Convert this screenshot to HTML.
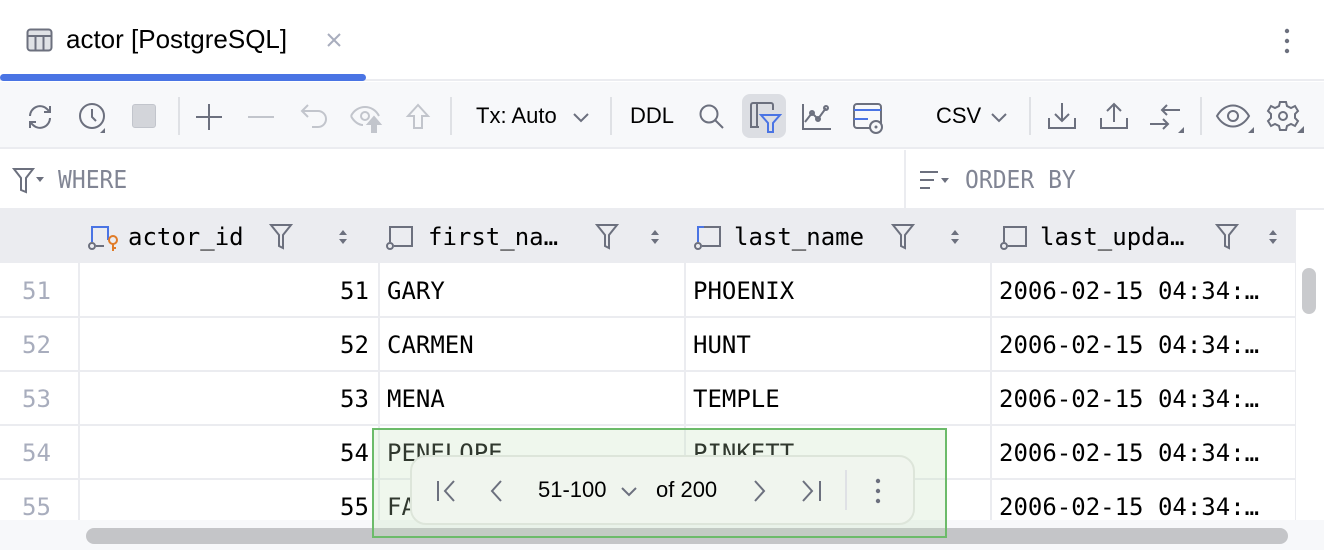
<!DOCTYPE html>
<html><head><style>
*{margin:0;padding:0;box-sizing:border-box}
body{width:1324px;height:550px;overflow:hidden;background:#fff;font-family:"Liberation Sans",sans-serif;position:relative;color:#000}
.abs{position:absolute}
.mono{font-family:"DejaVu Sans Mono","Liberation Mono",monospace}
svg{position:absolute;overflow:visible}
.cell{position:absolute;font-family:"DejaVu Sans Mono","Liberation Mono",monospace;font-size:24px;line-height:54px;white-space:nowrap}
</style></head><body>
<div class="abs" style="left:0;top:0;width:1324px;height:81px;background:#fff;border-bottom:2px solid #ebecf0"></div>
<svg style="left:26px;top:28px" width="28" height="26" viewBox="0 0 28 26"><rect x="1.5" y="1.5" width="24" height="21" rx="3" fill="#dfe1e5" stroke="#6c707e" stroke-width="2"/><path d="M1.5 8H25.5M9.5 8V22.5M17.5 8V22.5" stroke="#6c707e" stroke-width="2"/></svg>
<div class="abs" style="left:66px;top:24px;font-size:26px;color:#000">actor [PostgreSQL]</div>
<svg style="left:326px;top:32px" width="16" height="16"><path d="M2 2L14 14M14 2L2 14" stroke="#a8adbd" stroke-width="2"/></svg>
<div class="abs" style="left:0;top:74px;width:366px;height:7px;background:#4a74e4;border-radius:4px"></div>
<svg style="left:1284px;top:28px" width="6" height="26"><circle cx="3" cy="3" r="2.2" fill="#6c707e"/><circle cx="3" cy="13" r="2.2" fill="#6c707e"/><circle cx="3" cy="23" r="2.2" fill="#6c707e"/></svg>
<div class="abs" style="left:0;top:82px;width:1324px;height:67px;background:#f7f8fa;border-bottom:2px solid #ebecf0"></div>
<svg style="left:24px;top:102px" width="32" height="30" fill="none" stroke="#6c707e" stroke-width="2"><path d="M6 14a10 10 0 0 1 17-7l3 3M26 16a10 10 0 0 1-17 7l-3-3M26 4v6h-6M6 26v-6h6"/></svg>
<svg style="left:78px;top:100px" width="32" height="34" fill="none" stroke="#6c707e" stroke-width="2"><circle cx="14" cy="16" r="12"/><path d="M14 9v8l4 4"/><path d="M27 28l0 5-5 0z" fill="#6c707e" stroke="none"/></svg>
<div class="abs" style="left:132px;top:104px;width:24px;height:24px;background:#d3d5da;border:1.5px solid #c2c5cc;border-radius:3px"></div>
<div class="abs" style="left:178px;top:97px;width:2px;height:38px;background:#dfe1e5"></div>
<svg style="left:196px;top:104px" width="26" height="26" stroke="#6c707e" stroke-width="2"><path d="M13 0v26M0 13h26"/></svg>
<svg style="left:248px;top:104px" width="26" height="26" stroke="#c2c5cc" stroke-width="2"><path d="M0 13h26"/></svg>
<svg style="left:300px;top:103px" width="30" height="28" fill="none" stroke="#c2c5cc" stroke-width="2"><path d="M8 2L2 8l6 6M2 8h16a8 8 0 0 1 0 16h-6"/></svg>
<svg style="left:350px;top:104px" width="34" height="30" fill="none" stroke="#c2c5cc" stroke-width="2"><path d="M1 12c6-12 22-12 28 0M1 12c3 6 8 9 12 9"/><circle cx="15" cy="12" r="4"/><path d="M24 13l-6 7h4v8h4v-8h4z" fill="#c2c5cc"/></svg>
<svg style="left:406px;top:104px" width="24" height="26" fill="none" stroke="#c2c5cc" stroke-width="2"><path d="M12 1L2 12h6v12h8V12h6z"/></svg>
<div class="abs" style="left:450px;top:97px;width:2px;height:38px;background:#dfe1e5"></div>
<div class="abs" style="left:476px;top:103px;font-size:22px;color:#000">Tx: Auto</div>
<svg style="left:572px;top:112px" width="18" height="12" fill="none" stroke="#6c707e" stroke-width="2"><path d="M2 2l7 7 7-7"/></svg>
<div class="abs" style="left:610px;top:97px;width:2px;height:38px;background:#dfe1e5"></div>
<div class="abs" style="left:630px;top:103px;font-size:22px;color:#000">DDL</div>
<svg style="left:699px;top:104px" width="26" height="26" fill="none" stroke="#6c707e" stroke-width="2"><circle cx="10" cy="10" r="8.5"/><path d="M16 16l8 8"/></svg>
<div class="abs" style="left:742px;top:94px;width:44px;height:44px;background:#dcdee3;border-radius:8px"></div>
<svg style="left:750px;top:102px" width="32" height="32" fill="none" stroke-width="2"><path d="M12 1H3a2 2 0 0 0-2 2v22h8M7 1v24M7 1h14a2 2 0 0 1 2 2v5" stroke="#6c707e"/><path d="M11 13h19l-7 8v9h-5v-9z" stroke="#4a74e4"/></svg>
<svg style="left:802px;top:104px" width="30" height="26" fill="none" stroke="#6c707e" stroke-width="2"><path d="M1 0v25h28M3 18l7-9 6 6 8-11"/><circle cx="10" cy="9" r="2"/><circle cx="16" cy="15" r="2"/><circle cx="24" cy="4" r="2"/></svg>
<svg style="left:853px;top:103px" width="32" height="30" fill="none" stroke-width="2"><rect x="1" y="1" width="27" height="24" rx="3" stroke="#6c707e"/><path d="M1 7h27M1 16h14" stroke="#4a74e4"/><circle cx="23" cy="24" r="6" fill="#f7f8fa" stroke="#6c707e"/><circle cx="23" cy="24" r="1.5" fill="#6c707e"/></svg>
<div class="abs" style="left:936px;top:103px;font-size:22px;color:#000">CSV</div>
<svg style="left:990px;top:112px" width="18" height="12" fill="none" stroke="#6c707e" stroke-width="2"><path d="M2 2l7 7 7-7"/></svg>
<div class="abs" style="left:1029px;top:97px;width:2px;height:38px;background:#dfe1e5"></div>
<svg style="left:1048px;top:102px" width="28" height="28" fill="none" stroke="#6c707e" stroke-width="2"><path d="M14 1v18M7 12l7 7 7-7M1 16v10h26V16"/></svg>
<svg style="left:1100px;top:102px" width="28" height="28" fill="none" stroke="#6c707e" stroke-width="2"><path d="M14 20V2M7 9l7-7 7 7M1 16v10h26V16"/></svg>
<svg style="left:1150px;top:102px" width="36" height="32" fill="none" stroke="#6c707e" stroke-width="2"><path d="M12 8h18M17 3l-5 5 5 5M0 22h18M13 17l5 5-5 5"/><path d="M34 25v6h-6z" fill="#6c707e" stroke="none"/></svg>
<div class="abs" style="left:1200px;top:97px;width:2px;height:38px;background:#dfe1e5"></div>
<svg style="left:1216px;top:104px" width="38" height="30" fill="none" stroke="#6c707e" stroke-width="2"><path d="M1 12c8-14 24-14 32 0c-8 14-24 14-32 0z"/><circle cx="17" cy="12" r="5"/><path d="M38 23v6h-6z" fill="#6c707e" stroke="none"/></svg>
<svg style="left:1268px;top:100px" width="38" height="34" fill="none" stroke="#6c707e" stroke-width="2"><path d="M12 2h6l1 4 4 2 4-2 3 5-3 3v4l3 3-3 5-4-2-4 2-1 4h-6l-1-4-4-2-4 2-3-5 3-3v-4l-3-3 3-5 4 2 4-2z"/><circle cx="15" cy="16" r="4"/><path d="M36 26v7h-7z" fill="#6c707e" stroke="none"/></svg>
<svg style="left:13px;top:168px" width="34" height="28" fill="none" stroke="#6c707e" stroke-width="2"><path d="M1 1h19l-7 9v14l-5-2V10z"/><path d="M23 9h8l-4 5z" fill="#6c707e" stroke="none"/></svg>
<div class="abs mono" style="left:58px;top:165px;font-size:25px;color:#818594;transform:scaleX(.92);transform-origin:left">WHERE</div>
<div class="abs" style="left:904px;top:150px;width:2px;height:58px;background:#ebecf0"></div>
<svg style="left:920px;top:170px" width="32" height="22" fill="none" stroke="#6c707e" stroke-width="2"><path d="M0 2h18M0 10h14M0 18h10"/><path d="M21 8h8l-4 5z" fill="#6c707e" stroke="none"/></svg>
<div class="abs mono" style="left:965px;top:165px;font-size:25px;color:#818594;transform:scaleX(.92);transform-origin:left">ORDER BY</div>
<div class="abs" style="left:0;top:208px;width:1324px;height:2px;background:#ebecf0"></div>
<div class="abs" style="left:0;top:210px;width:1296px;height:53px;background:#ebecf0"></div>
<div class="abs" style="left:78px;top:210px;width:2px;height:312px;background:#ebecf0"></div>
<div class="abs" style="left:378px;top:210px;width:2px;height:312px;background:#ebecf0"></div>
<div class="abs" style="left:684px;top:210px;width:2px;height:312px;background:#ebecf0"></div>
<div class="abs" style="left:990px;top:210px;width:2px;height:312px;background:#ebecf0"></div>
<div class="abs" style="left:1295px;top:210px;width:1px;height:312px;background:#ebecf0"></div>
<div class="abs" style="left:0;top:316px;width:1296px;height:2px;background:#ebecf0"></div>
<div class="abs" style="left:0;top:370px;width:1296px;height:2px;background:#ebecf0"></div>
<div class="abs" style="left:0;top:424px;width:1296px;height:2px;background:#ebecf0"></div>
<div class="abs" style="left:0;top:478px;width:1296px;height:2px;background:#ebecf0"></div>
<svg style="left:88px;top:224px" width="36" height="28" fill="none" stroke-width="2"><path d="M4 18V3h16v13" stroke="#4a74e4"/><circle cx="4" cy="22" r="3" stroke="#6c707e"/><path d="M8 22h8" stroke="#6c707e"/><circle cx="25" cy="16" r="4" stroke="#e07b27"/><path d="M25 20v7M25 24h3" stroke="#e07b27"/></svg>
<div class="cell" style="left:128px;top:210px">actor_id</div>
<svg style="left:386px;top:224px" width="32" height="28" fill="none" stroke="#6c707e" stroke-width="2"><path d="M4 18V3h22v19H8"/><circle cx="4" cy="22" r="3"/></svg>
<div class="cell" style="left:428px;top:210px">first_na…</div>
<svg style="left:694px;top:224px" width="32" height="28" fill="none" stroke-width="2"><path d="M4 18V3h6" stroke="#4a74e4"/><path d="M10 3h16v19H8" stroke="#6c707e"/><circle cx="4" cy="22" r="3" stroke="#6c707e"/></svg>
<div class="cell" style="left:734px;top:210px">last_name</div>
<svg style="left:1000px;top:224px" width="32" height="28" fill="none" stroke="#6c707e" stroke-width="2"><path d="M4 18V3h22v19H8"/><circle cx="4" cy="22" r="3"/></svg>
<div class="cell" style="left:1040px;top:210px">last_upda…</div>
<svg style="left:270px;top:224px" width="24" height="26" fill="none" stroke="#6c707e" stroke-width="2"><path d="M1 1h20l-8 10v13l-4-2V11z"/></svg>
<svg style="left:338px;top:229px" width="10" height="16" fill="#6c707e"><path d="M5 1l4 5H1zM5 15l4-5H1z"/></svg>
<svg style="left:596px;top:224px" width="24" height="26" fill="none" stroke="#6c707e" stroke-width="2"><path d="M1 1h20l-8 10v13l-4-2V11z"/></svg>
<svg style="left:650px;top:229px" width="10" height="16" fill="#6c707e"><path d="M5 1l4 5H1zM5 15l4-5H1z"/></svg>
<svg style="left:892px;top:224px" width="24" height="26" fill="none" stroke="#6c707e" stroke-width="2"><path d="M1 1h20l-8 10v13l-4-2V11z"/></svg>
<svg style="left:950px;top:229px" width="10" height="16" fill="#6c707e"><path d="M5 1l4 5H1zM5 15l4-5H1z"/></svg>
<svg style="left:1216px;top:224px" width="24" height="26" fill="none" stroke="#6c707e" stroke-width="2"><path d="M1 1h20l-8 10v13l-4-2V11z"/></svg>
<svg style="left:1268px;top:229px" width="10" height="16" fill="#6c707e"><path d="M5 1l4 5H1zM5 15l4-5H1z"/></svg>
<div class="cell" style="left:22px;top:264px;color:#a8adbd">51</div>
<div class="cell" style="left:22px;top:318px;color:#a8adbd">52</div>
<div class="cell" style="left:22px;top:372px;color:#a8adbd">53</div>
<div class="cell" style="left:22px;top:426px;color:#a8adbd">54</div>
<div class="cell" style="left:22px;top:480px;color:#a8adbd">55</div>
<div class="cell" style="left:340px;top:264px">51</div>
<div class="cell" style="left:340px;top:318px">52</div>
<div class="cell" style="left:340px;top:372px">53</div>
<div class="cell" style="left:340px;top:426px">54</div>
<div class="cell" style="left:340px;top:480px">55</div>
<div class="cell" style="left:387px;top:264px">GARY</div>
<div class="cell" style="left:387px;top:318px">CARMEN</div>
<div class="cell" style="left:387px;top:372px">MENA</div>
<div class="cell" style="left:387px;top:426px">PENELOPE</div>
<div class="cell" style="left:387px;top:480px">FAY</div>
<div class="cell" style="left:693px;top:264px">PHOENIX</div>
<div class="cell" style="left:693px;top:318px">HUNT</div>
<div class="cell" style="left:693px;top:372px">TEMPLE</div>
<div class="cell" style="left:693px;top:426px">PINKETT</div>
<div class="cell" style="left:999px;top:264px">2006-02-15 04:34:…</div>
<div class="cell" style="left:999px;top:318px">2006-02-15 04:34:…</div>
<div class="cell" style="left:999px;top:372px">2006-02-15 04:34:…</div>
<div class="cell" style="left:999px;top:426px">2006-02-15 04:34:…</div>
<div class="cell" style="left:999px;top:480px">2006-02-15 04:34:…</div>
<div class="abs" style="left:1296px;top:210px;width:28px;height:312px;background:#fff"></div>
<div class="abs" style="left:1302px;top:268px;width:14px;height:46px;background:#c9cacd;border-radius:7px"></div>
<div class="abs" style="left:0;top:520px;width:1324px;height:30px;background:#f7f8fa"></div>
<div class="abs" style="left:86px;top:528px;width:1202px;height:16px;background:#c4c5c8;border-radius:8px"></div>
<div class="abs" style="left:372px;top:428px;width:575px;height:110px;border:2px solid #6cbb6a;background:rgba(190,225,185,0.25)"></div>
<div class="abs" style="left:410px;top:455px;width:505px;height:70px;border:2px solid #dde5da;background:#f0f5ee;border-radius:16px"></div>
<svg style="left:436px;top:479px" width="22" height="24" fill="none" stroke="#6c707e" stroke-width="2"><path d="M2 2v20M18 2l-9 10 9 10"/></svg>
<svg style="left:490px;top:479px" width="14" height="24" fill="none" stroke="#6c707e" stroke-width="2"><path d="M11 2l-9 10 9 10"/></svg>
<div class="abs" style="left:538px;top:477px;font-size:22px;color:#000">51-100</div>
<svg style="left:620px;top:486px" width="18" height="12" fill="none" stroke="#6c707e" stroke-width="2"><path d="M2 2l7 7 7-7"/></svg>
<div class="abs" style="left:656px;top:477px;font-size:22px;color:#000">of 200</div>
<svg style="left:752px;top:479px" width="14" height="24" fill="none" stroke="#6c707e" stroke-width="2"><path d="M3 2l9 10-9 10"/></svg>
<svg style="left:800px;top:479px" width="22" height="24" fill="none" stroke="#6c707e" stroke-width="2"><path d="M20 2v20M3 2l9 10-9 10"/></svg>
<div class="abs" style="left:845px;top:470px;width:2px;height:40px;background:#dfe1e5"></div>
<svg style="left:875px;top:478px" width="6" height="26"><circle cx="3" cy="3" r="2.2" fill="#6c707e"/><circle cx="3" cy="13" r="2.2" fill="#6c707e"/><circle cx="3" cy="23" r="2.2" fill="#6c707e"/></svg>
</body></html>
